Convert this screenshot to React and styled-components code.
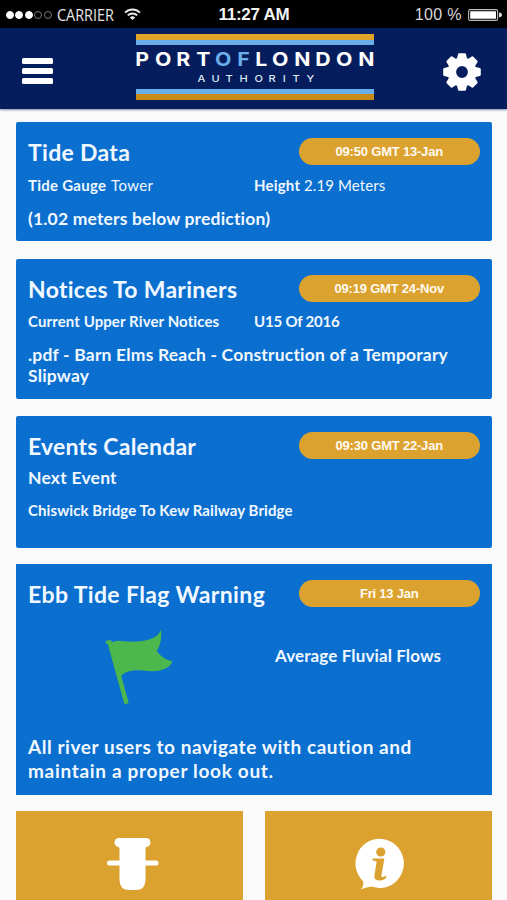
import React from 'react';
import styled, { createGlobalStyle } from 'styled-components';

const GlobalStyle = createGlobalStyle`
  *, *::before, *::after { box-sizing: border-box; }
  html, body { margin: 0; padding: 0; background: #fafafa; }
  body { height: 900px; overflow: hidden; }
`;

const Screen = styled.div`
  width: 507px;
  height: 900px;
  overflow: hidden;
  background: #fafafa;
  font-family: 'Lato', 'Open Sans', sans-serif;
  color: #f1f8ff;
`;

const StatusBar = styled.div`
  display: grid;
  grid-template-columns: 1fr auto 1fr;
  align-items: center;
  height: 28px;
  padding: 2px 5px 0 6px;
  background: #000;
  color: #e6e6e6;
`;

const StatusGroup = styled.div`
  display: flex;
  align-items: center;
  justify-content: ${(p) => (p.$end ? 'flex-end' : 'flex-start')};
`;

const Dots = styled.div`
  display: flex;
  gap: 1.4px;
`;

const Dot = styled.span`
  width: 8px;
  height: 8px;
  border-radius: 50%;
  background: ${(p) => (p.$on ? '#fff' : 'transparent')};
  border: 1px solid ${(p) => (p.$on ? '#fff' : '#777')};
`;

const Carrier = styled.span`
  display: inline-block;
  width: 57px;
  margin: 0 10px 0 5px;
  font: 400 16px/20px 'Open Sans', sans-serif;
  white-space: nowrap;
  transform: scaleX(0.9);
  transform-origin: 0 50%;
`;

const Clock = styled.span`
  font: 700 17px/20px 'Liberation Sans', sans-serif;
  letter-spacing: -0.25px;
  color: #f4f4f4;
`;

const Battery = styled.span`
  margin-right: 6px;
  font: 400 16px/20px 'Liberation Sans', sans-serif;
  letter-spacing: 0.4px;
  color: #d8d8d8;
`;

const Header = styled.header`
  display: flex;
  justify-content: space-between;
  align-items: flex-start;
  height: 80.5px;
  padding: 6px 26.5px 0 22px;
  background: #051d5c;
  box-shadow: 0 1px 2px rgba(5, 29, 92, 0.5);
`;

const Menu = styled.button`
  display: flex;
  flex-direction: column;
  gap: 4px;
  width: 31px;
  margin: 23.5px 0 0;
  padding: 0;
  border: 0;
  background: none;
`;

const MenuLine = styled.span`
  height: 6px;
  border-radius: 1.5px;
  background: #fff;
`;

const Logo = styled.div`
  display: flex;
  flex-direction: column;
  width: 238px;
  height: 66px;
  margin-left: 14px;
`;

const Stripes = styled.div`
  height: 11px;
  background: ${(p) =>
    p.$bottom
      ? 'linear-gradient(#69aee8 0 50%, #c98a18 50%)'
      : 'linear-gradient(#e2a32a 0 50%, #69aee8 50%)'};
`;

const LogoName = styled.div`
  height: 28px;
  margin-top: 1px;
  padding: 0 0.5px 0 0.5px;
  display: flex;
  justify-content: space-between;
  font: 700 19px/28px 'Inter', sans-serif;
  color: #fff;
`;

const LogoLetter = styled.span`
  color: ${(p) => (p.$accent ? '#69aee8' : '#fff')};
  transform: scaleX(1.12);
`;

const LogoSub = styled.div`
  display: flex;
  justify-content: space-between;
  flex: 1;
  padding: 0 60.5px 0 62px;
  font: 500 9.6px/9px 'Inter', sans-serif;
  color: #dfe8f6;
`;

const SubLetter = styled.span`
  transform: scaleX(1.15);
`;

const Gear = styled.button`
  display: flex;
  margin-top: 18.5px;
  padding: 0;
  border: 0;
  background: none;
`;

const Content = styled.main`
  display: flex;
  flex-direction: column;
  padding: 13.5px 15.5px 0 16px;
`;

const Card = styled.section`
  height: ${(p) => p.$height}px;
  margin-bottom: ${(p) => p.$after}px;
  padding: ${(p) => p.$top || 16}px 12px 0;
  border-radius: ${(p) => (p.$square ? 0 : 2)}px;
  background: #0a6fcf;
`;

const CardHead = styled.div`
  display: flex;
  justify-content: space-between;
  height: 28px;
`;

const Title = styled.h2`
  margin: 0;
  font-size: 23px;
  font-weight: 700;
  line-height: 28px;
  letter-spacing: ${(p) => p.$track}px;
  white-space: nowrap;
`;

const Pill = styled.span`
  width: 180.5px;
  height: 27px;
  border-radius: 14px;
  background: #dca22f;
  color: #fffaf0;
  text-align: center;
  font: 700 13px/28px 'Liberation Sans', sans-serif;
  letter-spacing: -0.2px;
`;

const Columns = styled.div`
  display: grid;
  grid-template-columns: 226px 1fr;
  margin-top: ${(p) => p.$gap}px;
`;

const Detail = styled.div`
  font-size: 15px;
  line-height: 20px;
  font-weight: 700;
  margin-top: ${(p) => p.$gap || 0}px;
  letter-spacing: ${(p) => p.$track || 0}px;
  white-space: nowrap;
`;

const Value = styled.span`
  font-weight: 400;
  letter-spacing: 0.1px;
`;

const Tower = styled(Value)`
  margin-left: 0.8px;
  letter-spacing: 0.4px;
`;

const Lead = styled.p`
  margin: ${(p) => p.$gap}px 0 0;
  font-size: 17.5px;
  line-height: 21px;
  font-weight: 700;
  letter-spacing: ${(p) => p.$track}px;
`;

const FlagRow = styled.div`
  display: flex;
  height: 127.5px;
  padding: 21.5px 0 0 76px;
`;

const FlowLabel = styled.div`
  margin: 15.5px 0 0 102px;
  font-size: 17px;
  line-height: 21px;
  font-weight: 700;
  letter-spacing: 0.12px;
`;

const Advice = styled.p`
  margin: 0;
  font-size: 19px;
  line-height: 24px;
  font-weight: 700;
  letter-spacing: ${(p) => p.$track}px;
`;

const Tiles = styled.div`
  display: grid;
  grid-template-columns: 227px 226.5px;
  justify-content: space-between;
`;

const Tile = styled.button`
  display: flex;
  justify-content: center;
  align-items: flex-start;
  height: 120px;
  padding: 26px 0 0 ${(p) => p.$shift}px;
  border: 0;
  background: #dca22f;
`;

const WifiIcon = () => (
  <svg width="17" height="15" viewBox="0 0 17 15" fill="none" stroke="#e8e8e8" strokeWidth="1.9">
    <path d="M1 4.6C5.2 0.4 11.8 0.4 16 4.6" />
    <path d="M3.8 7.4C6.4 4.8 10.6 4.8 13.2 7.4" />
    <path d="M8.5 12 5.8 9.4Q8.5 7.2 11.2 9.4Z" fill="#e8e8e8" stroke="none" />
  </svg>
);

const BatteryIcon = () => (
  <svg width="34" height="12" viewBox="0 0 34 12">
    <rect x="0.6" y="0.6" width="29" height="10.8" rx="1.5" fill="none" stroke="#bbb" strokeWidth="1.1" />
    <rect x="2.2" y="2.2" width="25.8" height="7.6" rx="0.5" fill="#fff" />
    <path d="M31 3.6Q34 4 34 6T31 8.4Z" fill="#ddd" />
  </svg>
);

const teeth = [0, 45, 90, 135, 180, 225, 270, 315];

const GearIcon = () => (
  <svg width="38" height="38" viewBox="-19 -19 38 38">
    <circle r="10.2" fill="none" stroke="#fff" strokeWidth="8.6" />
    {teeth.map((a) => (
      <path
        key={a}
        transform={`rotate(${a})`}
        d="M-5.4-12 L-4-17.8Q-3.8-18.8-2.8-18.8H2.8Q3.8-18.8 4-17.8L5.4-12Z"
        fill="#fff"
      />
    ))}
  </svg>
);

const FlagIcon = () => (
  <svg width="69" height="76" viewBox="104 629 69 76" fill="#4cb74d">
    <path d="M105.4 642.4Q105.6 640.6 108 640.3L111 640.2Q112.6 640.8 111.4 642.6Q115 640.6 121 640.9C137 642.8 157 641.6 161 629.8C162 639 160 646 156.8 651C161 657 166 659.6 172.6 661.6C168 672 153 672 143 670.4C133 669.6 126 671 121.2 675.8L128.6 702.6Q126.8 704.8 124.2 703.4L107.8 643.9Q105.8 643.8 105.4 642.4Z" />
  </svg>
);

const LockIcon = () => (
  <svg width="52" height="54" viewBox="0 0 52 54" fill="#fff">
    <rect x="7.5" y="1" width="36" height="9" rx="4.5" />
    <path d="M10 9Q12.5 9.5 12.5 12V43Q12.5 53 22.5 53H28.5Q38.5 53 38.5 43V12Q38.5 9.5 41 9Z" />
    <rect x="0" y="23.5" width="51.5" height="5" rx="2.5" />
  </svg>
);

const InfoIcon = () => (
  <svg width="50" height="54" viewBox="0 0 50 54">
    <path d="M25 1.8A24.2 24.6 0 1 1 16.6 49.6Q12 50.4 5.8 52.2Q9.6 48.6 7.8 44A24.2 24.6 0 0 1 25 1.8Z" fill="#fff" />
    <circle cx="25.8" cy="15" r="4.6" fill="#dca22f" />
    <path d="M17.6 21.4H29.4L26.4 38.6Q26.2 40.6 28 40L31.6 38.8Q31 43.6 24.6 43.6Q18.6 43.4 19.4 38.2L21.6 25.2Q21.4 23.8 17.6 23.6Z" fill="#dca22f" />
  </svg>
);

export default function App() {
  return (
    <Screen>
      <GlobalStyle />
      <StatusBar>
        <StatusGroup>
          <Dots>
            {[1, 1, 1, 0, 0].map((on, i) => (
              <Dot key={i} $on={on} />
            ))}
          </Dots>
          <Carrier>CARRIER</Carrier>
          <WifiIcon />
        </StatusGroup>
        <Clock>11:27 AM</Clock>
        <StatusGroup $end>
          <Battery>100 %</Battery>
          <BatteryIcon />
        </StatusGroup>
      </StatusBar>

      <Header>
        <Menu aria-label="Menu">
          <MenuLine />
          <MenuLine />
          <MenuLine />
        </Menu>
        <Logo>
          <Stripes />
          <LogoName>
            {'PORTOFLONDON'.split('').map((c, i) => (
              <LogoLetter key={i} $accent={i === 4 || i === 5}>{c}</LogoLetter>
            ))}
          </LogoName>
          <LogoSub>
            {'AUTHORITY'.split('').map((c, i) => (
              <SubLetter key={i}>{c}</SubLetter>
            ))}
          </LogoSub>
          <Stripes $bottom />
        </Logo>
        <Gear aria-label="Settings">
          <GearIcon />
        </Gear>
      </Header>

      <Content>
        <Card $height={119} $after={18}>
          <CardHead>
            <Title $track={0.3}>Tide Data</Title>
            <Pill>09:50 GMT 13-Jan</Pill>
          </CardHead>
          <Columns $gap={9}>
            <Detail $track={0.26}>Tide Gauge <Tower>Tower</Tower></Detail>
            <Detail $track={0.2}>Height <Value>2.19 Meters</Value></Detail>
          </Columns>
          <Lead $gap={13} $track={0.17}>(1.02 meters below prediction)</Lead>
        </Card>

        <Card $height={139.5} $after={17.5} $top={15.5}>
          <CardHead>
            <Title $track={0.27}>Notices To Mariners</Title>
            <Pill>09:19 GMT 24-Nov</Pill>
          </CardHead>
          <Columns $gap={8.5}>
            <Detail $track={0.1}>Current Upper River Notices</Detail>
            <Detail $track={-0.2}>U15 Of 2016</Detail>
          </Columns>
          <Lead $gap={13} $track={0.18}>
            .pdf - Barn Elms Reach - Construction of a Temporary Slipway
          </Lead>
        </Card>

        <Card $height={132} $after={15.5}>
          <CardHead>
            <Title $track={0.2}>Events Calendar</Title>
            <Pill>09:30 GMT 22-Jan</Pill>
          </CardHead>
          <Lead $gap={6.5} $track={0.22}>Next Event</Lead>
          <Detail $gap={12} $track={0.09}>Chiswick Bridge To Kew Railway Bridge</Detail>
        </Card>

        <Card $height={231.5} $after={16} $square>
          <CardHead>
            <Title $track={0.37}>Ebb Tide Flag Warning</Title>
            <Pill>Fri 13 Jan</Pill>
          </CardHead>
          <FlagRow>
            <FlagIcon />
            <FlowLabel>Average Fluvial Flows</FlowLabel>
          </FlagRow>
          <Advice $track={0.56}>All river users to navigate with caution and</Advice>
          <Advice $track={0.68}>maintain a proper look out.</Advice>
        </Card>

        <Tiles>
          <Tile aria-label="Locks" $shift={6}>
            <LockIcon />
          </Tile>
          <Tile aria-label="Information" $shift={3}>
            <InfoIcon />
          </Tile>
        </Tiles>
      </Content>
    </Screen>
  );
}
